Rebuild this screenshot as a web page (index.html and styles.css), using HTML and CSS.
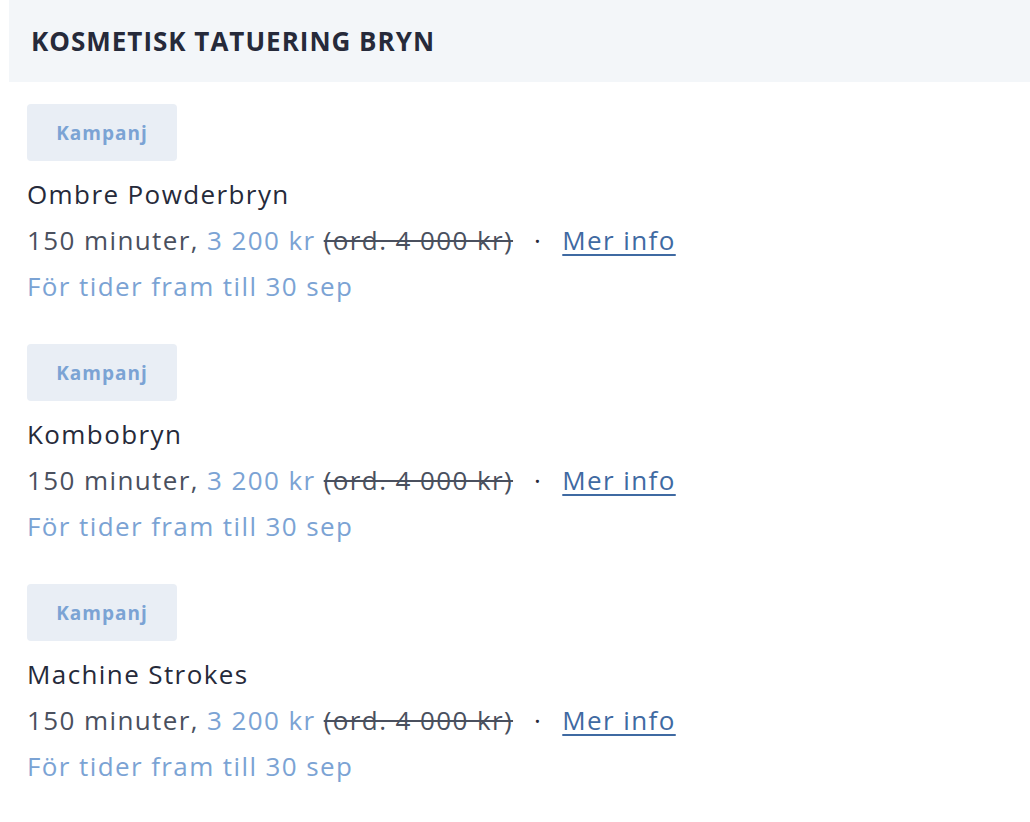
FILE: index.html
```html
<!DOCTYPE html>
<html lang="sv">
<head>
<meta charset="utf-8">
<link rel="stylesheet" href="styles.css">
</head>
<body>
<section class="category">
  <h2 class="category-title">KOSMETISK TATUERING BRYN</h2>
  <ul class="services">
    <li class="service">
      <span class="badge">Kampanj</span>
      <div class="name">Ombre Powderbryn</div>
      <div class="meta">150 minuter, <span class="price">3 200 kr</span> <s class="old">(ord. 4 000 kr)</s><span class="sep">·</span><a class="more" href="#">Mer info</a></div>
      <div class="note">För tider fram till 30 sep</div>
    </li>
    <li class="service">
      <span class="badge">Kampanj</span>
      <div class="name">Kombobryn</div>
      <div class="meta">150 minuter, <span class="price">3 200 kr</span> <s class="old">(ord. 4 000 kr)</s><span class="sep">·</span><a class="more" href="#">Mer info</a></div>
      <div class="note">För tider fram till 30 sep</div>
    </li>
    <li class="service">
      <span class="badge">Kampanj</span>
      <div class="name">Machine Strokes</div>
      <div class="meta">150 minuter, <span class="price">3 200 kr</span> <s class="old">(ord. 4 000 kr)</s><span class="sep">·</span><a class="more" href="#">Mer info</a></div>
      <div class="note">För tider fram till 30 sep</div>
    </li>
  </ul>
</section>
</body>
</html>
```
FILE: styles.css
```css
* { box-sizing: border-box; }
html, body { margin: 0; padding: 0; background: #fff; }
body {
  font-family: "Open Sans", "Noto Sans", sans-serif;
  color: #262a3a;
  padding-left: 9px;
}
.category-title {
  margin: 0;
  height: 82px;
  display: flex;
  align-items: center;
  padding-left: 22px;
  background: #f3f6f9;
  font-size: 26px;
  font-weight: 700;
  letter-spacing: 1px;
  color: #262a3a;
}
.services {
  list-style: none;
  margin: 0;
  padding: 22px 0 0 18px;
}
.service {
  display: flex;
  flex-direction: column;
  align-items: flex-start;
  margin-bottom: 33px;
}
.badge {
  width: 150px;
  height: 57px;
  display: flex;
  align-items: center;
  justify-content: center;
  background: #e9eef5;
  border-radius: 4px;
  color: #7ba3d4;
  font-size: 19px;
  font-weight: 700;
  letter-spacing: 1px;
  margin-bottom: 12px;
}
.name, .meta, .note {
  font-size: 26px;
  line-height: 46px;
  letter-spacing: 1.4px;
  margin-top: -2px;
  margin-bottom: 2px;
}
.name { color: #262a3a; }
.meta { color: #4a505e; }
.price { color: #7ba3d4; }
.old { color: #4a505e; text-decoration-thickness: 2px; }
.sep { margin: 0 20px 0 21px; color: #262a3a; }
.more {
  color: #3f6aa2;
  text-decoration: underline;
  text-decoration-thickness: 2px;
  text-underline-offset: 4px;
}
.note { color: #7ba3d4; }
```
